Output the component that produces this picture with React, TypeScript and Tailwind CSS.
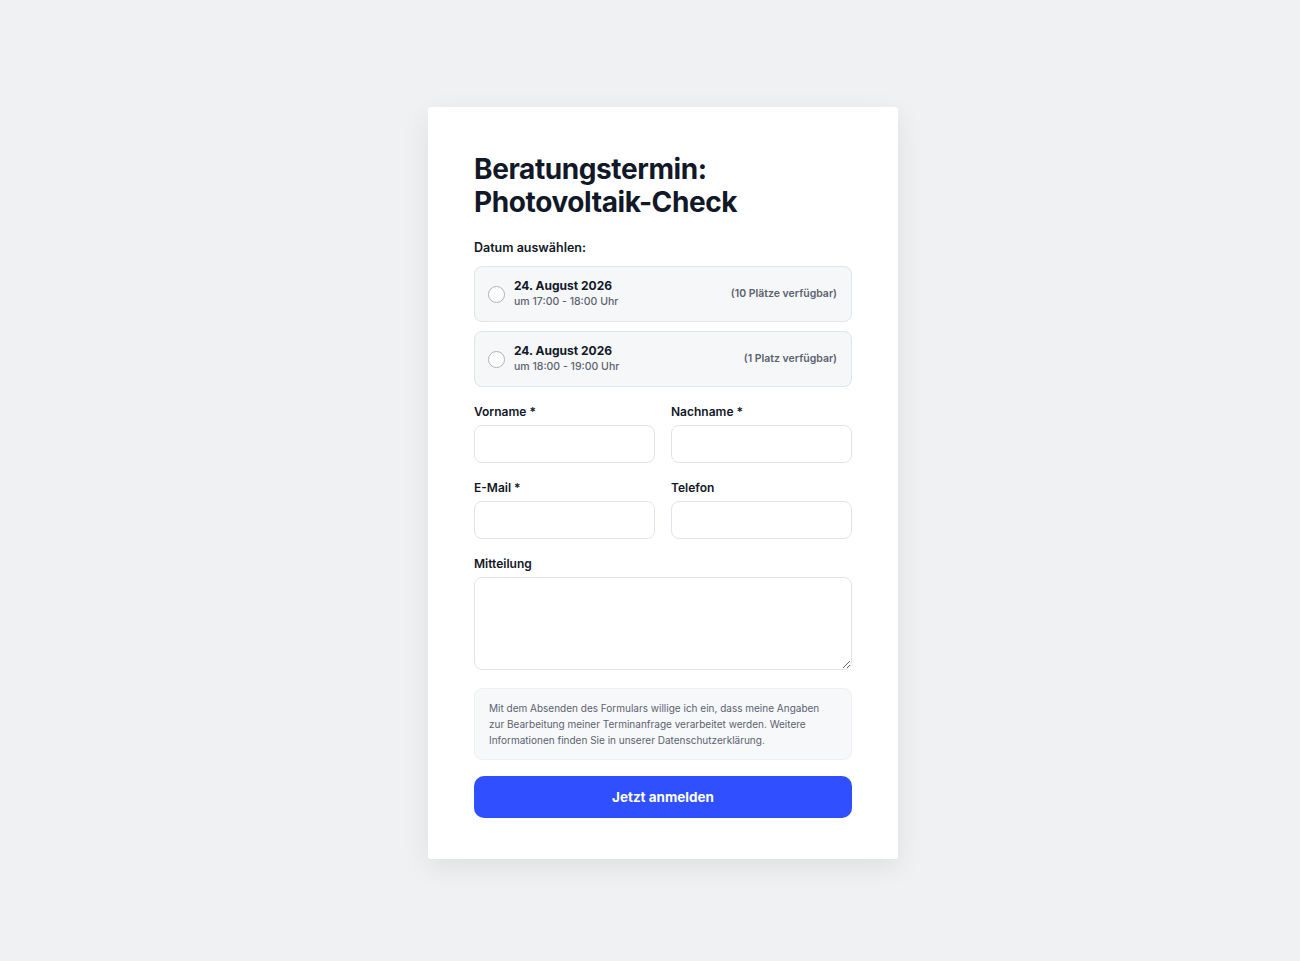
import React from 'react';

const slots = [
    { date: '24. August 2026', time: 'um 17:00 - 18:00 Uhr', free: '(10 Plätze verfügbar)' },
    { date: '24. August 2026', time: 'um 18:00 - 19:00 Uhr', free: '(1 Platz verfügbar)' },
];

const Field: React.FC<{ label: string }> = ({ label }) => (
    <div className="flex flex-col">
        <label className="text-[12px] font-semibold text-[#111827] leading-4 mb-[5px]">{label}</label>
        <input className="h-[38px] rounded-[8px] border border-[#e1e4ea] bg-white px-3 text-sm outline-none" />
    </div>
);

export default function App() {
    return (
        <div
            className="min-h-screen bg-[#f0f1f3] flex justify-center items-start pt-[107px] pl-[26px]"
            style={{ fontFamily: 'Inter, "Noto Sans", sans-serif' }}
        >
            <div className="w-[470px] bg-white rounded-[3px] shadow-[0_8px_28px_rgba(0,0,0,0.08)] px-[46px] pt-[46px] pb-[41px]">
                {/* Heading */}
                <h1 className="text-[28px] font-bold leading-[33px] tracking-[-0.4px] text-[#111827]">
                    Beratungstermin:
                    <br />
                    Photovoltaik-Check
                </h1>

                <div className="mt-[21px] text-[12.5px] font-semibold text-[#111827] leading-4">Datum auswählen:</div>

                <div className="mt-[10px] flex flex-col gap-[9px]">
                    {slots.map((s, i) => (
                        <label
                            key={i}
                            className="h-[56px] flex items-center rounded-[8px] border border-[#e1e4ea] bg-[#f6f7f9] pl-[13px] pr-[14px] cursor-pointer"
                        >
                            <span className="w-[17px] h-[17px] rounded-full border-[1.5px] border-[#aab1be] bg-white shrink-0" />
                            <span className="ml-[9px] flex flex-col">
                                <span className="text-[12px] font-bold text-[#111827] leading-4">{s.date}</span>
                                <span className="text-[10.5px] font-medium text-[#5b6270] leading-4">{s.time}</span>
                            </span>
                            <span className="ml-auto text-[10.5px] font-semibold text-[#5b6270]">{s.free}</span>
                        </label>
                    ))}
                </div>

                <div className="mt-[17px] grid grid-cols-2 gap-x-4 gap-y-[17px]">
                    <Field label="Vorname *" />
                    <Field label="Nachname *" />
                    <Field label="E-Mail *" />
                    <Field label="Telefon" />
                </div>

                <div className="mt-[17px] flex flex-col">
                    <label className="text-[12px] font-semibold text-[#111827] leading-4 mb-[5px]">Mitteilung</label>
                    <textarea className="h-[93px] rounded-[8px] border border-[#e1e4ea] bg-white px-3 py-2 text-sm outline-none" />
                </div>

                <div className="mt-[18px] rounded-[8px] border border-[#eef0f3] bg-[#f7f8fa] px-[14px] py-[11px] text-[10px] leading-4 text-[#5b6270]">
                    Mit dem Absenden des Formulars willige ich ein, dass meine Angaben zur Bearbeitung meiner
                    Terminanfrage verarbeitet werden. Weitere Informationen finden Sie in unserer Datenschutzerklärung.
                </div>

                <button className="mt-4 w-full h-[42px] rounded-[10px] bg-[#3050ff] text-white text-[13.5px] font-bold">
                    Jetzt anmelden
                </button>
            </div>
        </div>
    );
}
